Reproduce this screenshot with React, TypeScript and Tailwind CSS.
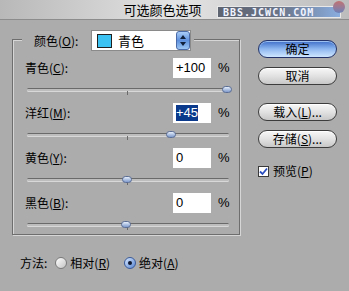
import React from "react";

const cjk = { fontFamily: '"Noto Sans CJK SC", "Liberation Sans", sans-serif' };
const lat = { fontFamily: '"Liberation Sans", "Noto Sans CJK SC", sans-serif' };

function Slider({ pos }: { pos: number }) {
  return (
    <div className="relative h-[14px] w-[202px] ml-[14px]">
      <div className="absolute left-0 right-0 top-[6px] h-[3px] rounded-full border-t border-[#6a6a6a] bg-[#bdbdbd] shadow-[0_1px_0_#d8d8d8]" />
      <div className="absolute left-[100px] top-[9px] h-[4px] w-px bg-[#6a6a6a]" />
      <div
        className="absolute top-[4px] h-[7px] w-[10px] -ml-[5px] rounded-full border border-[#5a6e96] bg-gradient-to-b from-[#e6eefa] to-[#7f9acb]"
        style={{ left: pos }}
      />
    </div>
  );
}

function Row({ label, u, rest, value, selected }: { label: string; u: string; rest: string; value: string; selected?: boolean }) {
  return (
    <div className="flex h-[20px] items-center">
      <div className="ml-[12px] w-[148px] text-[12px] text-black" style={cjk}>
        {label}(<span className="underline">{u}</span>){rest}
      </div>
      <div className="flex h-[20px] w-[38px] items-center bg-white pl-[3px] text-[13px] text-black" style={lat}>
        {selected ? <span className="bg-[#0b3a8c] px-0 leading-[16px] text-white">{value}</span> : value}
      </div>
      <div className="ml-[7px] text-[13px] text-black" style={lat}>%</div>
    </div>
  );
}

function PillButton({ children, primary }: { children: React.ReactNode; primary?: boolean }) {
  return (
    <div
      className={
        "flex h-[18px] w-[79px] items-center justify-center rounded-full border text-[12px] text-black " +
        (primary
          ? "border-[#24346a] bg-gradient-to-b from-[#3e6cc8] via-[#8fb8f0] to-[#cfe6ff] shadow-[inset_0_1px_0_#9cc0f0]"
          : "border-[#3c3c3c] bg-gradient-to-b from-[#f8f8f8] via-[#e2e2e2] to-[#c8c8c8] shadow-[inset_0_1px_0_#ffffff]")
      }
      style={cjk}
    >
      {children}
    </div>
  );
}

export default function App() {
  return (
    <div className="relative h-[291px] w-[349px] overflow-hidden bg-[#acacac]">
      {/* title bar */}
      <div className="relative flex h-[20px] items-center justify-center border-b border-[#8c8c8c] bg-gradient-to-r from-[#b8b8b8] via-[#e4e4e4] to-[#bcbcbc]">
        <div className="ml-[-24px] text-[13px] text-black" style={cjk}>可选颜色选项</div>
        <div className="absolute left-[217px] top-[6px] flex h-[12px] w-[124px] items-center border border-[#e8e8e8] bg-gradient-to-r from-[#5e6470] via-[#6a7488] to-[#8aaee0] pl-[5px] text-[10px] font-bold tracking-[1px] text-[#f0f4ff]" style={{ fontFamily: '"DejaVu Sans Mono", monospace' }}>
          BBS.JCWCN.COM
        </div>
        <div className="absolute left-[333px] top-[1px] h-[12px] w-[12px] rounded-full bg-gradient-to-b from-[#c07070] to-[#6a80b8]" />
      </div>

      <div className="flex">
        {/* left group */}
        <div className="ml-[12px] mt-[19px] h-[196px] w-[228px] border border-[#6e6e6e] shadow-[1px_1px_0_#d6d6d6,inset_1px_1px_0_#d6d6d6]">
          <div className="-mt-[10px] ml-[9px] flex h-[21px] w-[172px] items-center bg-[#acacac]">
            <div className="ml-[12px] w-[57px] text-[12px] text-black" style={cjk}>
              颜色(<span className="underline">O</span>):
            </div>
            <div className="flex h-[21px] w-[100px] items-center border border-[#8a8a8a] bg-white">
              <div className="ml-[5px] h-[14px] w-[15px] border border-[#202020] bg-[#3cc2f2]" />
              <div className="ml-[6px] flex-1 text-[13px] text-black" style={cjk}>青色</div>
              <div className="flex h-[19px] w-[14px] items-center justify-center rounded-[3px] border border-[#4a6aa8] bg-gradient-to-b from-[#a9cdf7] via-[#5d8fdc] to-[#9cc6f4]">
                <svg width="6" height="11" viewBox="0 0 6 11">
                  <path d="M3 0 L6 4 L0 4 Z" fill="#10203a" />
                  <path d="M0 7 L6 7 L3 11 Z" fill="#10203a" />
                </svg>
              </div>
            </div>
          </div>

          <div className="mt-[7px]">
            <Row label="青色" u="C" rest=":" value="+100" />
            <div className="mt-[4px] mb-[7px]"><Slider pos={200} /></div>
            <Row label="洋红" u="M" rest=":" value="+45" selected />
            <div className="mt-[4px] mb-[7px]"><Slider pos={144} /></div>
            <Row label="黄色" u="Y" rest=":" value="0" />
            <div className="mt-[4px] mb-[7px]"><Slider pos={100} /></div>
            <Row label="黑色" u="B" rest=":" value="0" />
            <div className="mt-[4px]"><Slider pos={99} /></div>
          </div>
        </div>

        {/* right column */}
        <div className="ml-[18px] mt-[20px] flex flex-col">
          <PillButton primary>确定</PillButton>
          <div className="mt-[9px]"><PillButton>取消</PillButton></div>
          <div className="mt-[18px]"><PillButton>载入(<span className="underline">L</span>)...</PillButton></div>
          <div className="mt-[9px]"><PillButton>存储(<span className="underline">S</span>)...</PillButton></div>
          <div className="mt-[14px] flex items-center">
            <div className="flex h-[11px] w-[11px] items-center justify-center border border-[#3a3a3a] bg-white">
              <svg width="9" height="9" viewBox="0 0 9 9">
                <path d="M1 4.5 L3.5 7 L8 1.5" fill="none" stroke="#2a4ec0" strokeWidth="1.8" />
              </svg>
            </div>
            <div className="ml-[4px] text-[12px] text-black" style={cjk}>
              预览(<span className="underline">P</span>)
            </div>
          </div>
        </div>
      </div>

      {/* bottom method */}
      <div className="mt-[19px] flex items-center pl-[20px] text-[12px] text-black" style={cjk}>
        <span>方法:</span>
        <div className="ml-[8px] h-[12px] w-[12px] rounded-full border border-[#7a7a7a] bg-gradient-to-br from-[#ffffff] to-[#c4c4c4]" />
        <span className="ml-[3px]">相对(<span className="underline">R</span>)</span>
        <div className="ml-[14px] flex h-[12px] w-[12px] items-center justify-center rounded-full border border-[#3a5a9a] bg-gradient-to-br from-[#d8e8ff] to-[#5a86d0]">
          <div className="h-[4px] w-[4px] rounded-full bg-[#101830]" />
        </div>
        <span className="ml-[3px]">绝对(<span className="underline">A</span>)</span>
      </div>
    </div>
  );
}
